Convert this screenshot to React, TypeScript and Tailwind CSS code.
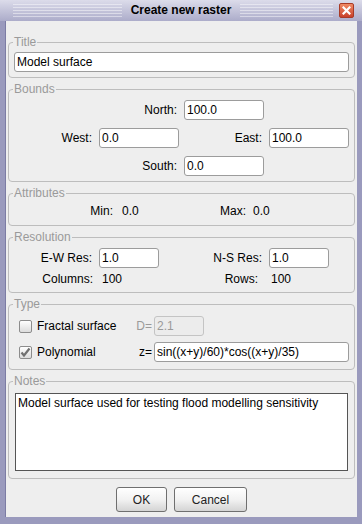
import type { ReactNode } from "react";

const font = "font-['Liberation_Sans',Arial,sans-serif]";

function Group({ title, children, className = "" }: { title: string; children: ReactNode; className?: string }) {
  return (
    <fieldset className={`mx-[2px] rounded-[4px] border border-[#bdbdbd] ${className}`}>
      <legend className="ml-[4px] px-[1px] text-[12px] leading-[14px] text-[#9a9a9a]">{title}</legend>
      {children}
    </fieldset>
  );
}

function Field({ value, width, disabled = false }: { value: string; width: string; disabled?: boolean }) {
  return (
    <div
      className={`h-[20px] ${width} flex items-center rounded-[3px] border pl-[2px] text-[12px] ${
        disabled ? "border-[#c4c4c4] bg-[#ececec] text-[#9a9a9a]" : "border-[#9c9c9c] bg-white text-black"
      }`}
    >
      {value}
    </div>
  );
}

function CheckBox({ checked }: { checked: boolean }) {
  return (
    <div className="flex h-[13px] w-[13px] items-center justify-center rounded-[2px] border border-[#8c8c8c] bg-gradient-to-b from-white to-[#dcdcdc]">
      {checked && (
        <svg width="11" height="11" viewBox="0 0 11 11">
          <path d="M1.5 5.5 L4 8.5 L9.5 1.5" stroke="#707070" strokeWidth="2.2" fill="none" />
        </svg>
      )}
    </div>
  );
}

function Button({ label, width }: { label: string; width: string }) {
  return (
    <div
      className={`${width} flex h-[25px] items-center justify-center rounded-[3px] border border-[#6f6f6f] bg-gradient-to-b from-white via-[#f2f2f2] to-[#d4d4d4] text-[12px] text-[#222]`}
    >
      {label}
    </div>
  );
}

export default function App() {
  return (
    <div className={`${font} flex h-[524px] w-[362px] flex-col bg-[#9a9abd] text-[12px] text-black`}>
      {/* title bar */}
      <div className="relative flex h-[21px] shrink-0 items-center bg-gradient-to-b from-[#dcdcea] to-[#acacca]">
        <div className="ml-[13px] h-[14px] w-[109px] bg-[repeating-linear-gradient(to_bottom,rgba(255,255,255,0.45)_0_1px,transparent_1px_3px)]" />
        <div className="w-[118px] text-center text-[12px] font-bold leading-[21px] text-black">Create new raster</div>
        <div className="h-[14px] w-[93px] bg-[repeating-linear-gradient(to_bottom,rgba(255,255,255,0.45)_0_1px,transparent_1px_3px)]" />
        <div className="ml-[6px] flex h-[15px] w-[15px] items-center justify-center rounded-[2px] border border-[#a83a26] bg-gradient-to-b from-[#f08a66] to-[#c8402a]">
          <svg width="9" height="9" viewBox="0 0 9 9">
            <path d="M1.5 1.5 L7.5 7.5 M7.5 1.5 L1.5 7.5" stroke="white" strokeWidth="2.2" strokeLinecap="square" />
          </svg>
        </div>
      </div>

      {/* content */}
      <div className="mx-[5px] mb-[7px] flex flex-1 flex-col gap-[4px] border-l border-[#7c7ca4] bg-[#eeeeee] pt-[14px]">
        <Group title="Title">
          <div className="pb-[5px] pl-[5px] pr-[5px] pt-[3px]">
            <Field value="Model surface" width="w-full" />
          </div>
        </Group>

        <Group title="Bounds">
          <div className="flex flex-col gap-[8px] pb-[5px] pt-[4px]">
            <div className="flex items-center">
              <div className="w-[168px] text-right">North:</div>
              <div className="ml-[7px]">
                <Field value="100.0" width="w-[80px]" />
              </div>
            </div>
            <div className="flex items-center">
              <div className="w-[83px] text-right">West:</div>
              <div className="ml-[7px]">
                <Field value="0.0" width="w-[80px]" />
              </div>
              <div className="w-[83px] text-right">East:</div>
              <div className="ml-[7px]">
                <Field value="100.0" width="w-[80px]" />
              </div>
            </div>
            <div className="flex items-center">
              <div className="w-[168px] text-right">South:</div>
              <div className="ml-[7px]">
                <Field value="0.0" width="w-[80px]" />
              </div>
            </div>
          </div>
        </Group>

        <Group title="Attributes">
          <div className="flex h-[25px] items-center pb-[4px]">
            <div className="w-[104px] text-right">Min:</div>
            <div className="ml-[9px] w-[24px]">0.0</div>
            <div className="w-[100px] text-right">Max:</div>
            <div className="ml-[7px]">0.0</div>
          </div>
        </Group>

        <Group title="Resolution">
          <div className="flex flex-col pb-[6px] pt-[4px]">
            <div className="flex h-[20px] items-center">
              <div className="w-[83px] text-right">E-W Res:</div>
              <div className="ml-[7px]">
                <Field value="1.0" width="w-[60px]" />
              </div>
              <div className="w-[103px] text-right">N-S Res:</div>
              <div className="ml-[7px]">
                <Field value="1.0" width="w-[60px]" />
              </div>
            </div>
            <div className="mt-[4px] flex h-[14px] items-center">
              <div className="w-[84px] text-right">Columns:</div>
              <div className="ml-[9px] w-[60px]">100</div>
              <div className="w-[96px] text-right">Rows:</div>
              <div className="ml-[13px]">100</div>
            </div>
          </div>
        </Group>

        <Group title="Type">
          <div className="flex flex-col gap-[6px] pb-[7px] pt-[5px]">
            <div className="flex h-[20px] items-center">
              <div className="ml-[10px]">
                <CheckBox checked={false} />
              </div>
              <div className="ml-[5px] w-[97px]">Fractal surface</div>
              <div className="w-[18px] text-right text-[#9a9a9a]">D=</div>
              <div className="ml-[2px]">
                <Field value="2.1" width="w-[50px]" disabled />
              </div>
            </div>
            <div className="flex h-[20px] items-center">
              <div className="ml-[10px]">
                <CheckBox checked />
              </div>
              <div className="ml-[5px] w-[97px]">Polynomial</div>
              <div className="w-[18px] text-right">z=</div>
              <div className="ml-[2px]">
                <Field value="sin((x+y)/60)*cos((x+y)/35)" width="w-[195px]" />
              </div>
            </div>
          </div>
        </Group>

        <Group title="Notes">
          <div className="pb-[7px] pl-[6px] pr-[6px] pt-[5px]">
            <div className="h-[78px] w-full border border-[#555] bg-white pl-[2px] pt-[2px] text-[12px] leading-[14px]">
              Model surface used for testing flood modelling sensitivity
            </div>
          </div>
        </Group>

        <div className="mt-[4px] flex justify-center gap-[7px]">
          <Button label="OK" width="w-[51px]" />
          <Button label="Cancel" width="w-[73px]" />
        </div>
      </div>
    </div>
  );
}
